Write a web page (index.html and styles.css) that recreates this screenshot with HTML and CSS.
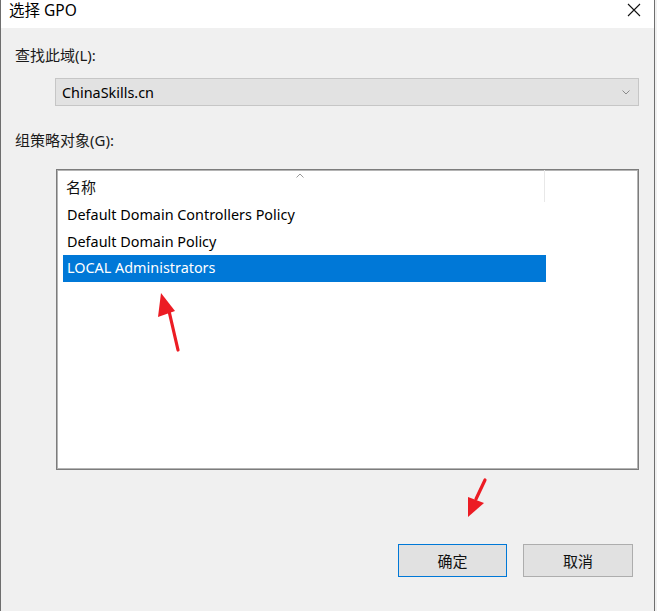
FILE: index.html
```html
<!DOCTYPE html>
<html lang="zh-CN">
<head>
<meta charset="utf-8">
<title>选择 GPO</title>
<link rel="stylesheet" href="styles.css">
</head>
<body>
<div class="dialog">
  <div class="titlebar">
    <span class="title">选择 GPO</span>
    <svg class="close" width="14" height="14" viewBox="0 0 14 14"><path d="M1 1 L13 13 M13 1 L1 13" stroke="#111" stroke-width="1.1" fill="none"/></svg>
  </div>
  <div class="content">
    <div class="label label-domain">查找此域(L):</div>
    <div class="combo">
      <span class="combo-text">ChinaSkills.cn</span>
      <svg class="chev" width="8" height="5" viewBox="0 0 8 5"><path d="M0.5 0.5 L4 4 L7.5 0.5" stroke="#8a8a8a" stroke-width="1" fill="none"/></svg>
    </div>
    <div class="label label-gpo">组策略对象(G):</div>
    <div class="listbox">
      <div class="header">
        <div class="header-cell">
          <span class="hdr-text">名称</span>
          <svg class="sort" width="8" height="5" viewBox="0 0 8 5"><path d="M0.5 4.5 L4 1 L7.5 4.5" stroke="#9a9a9a" stroke-width="1" fill="none"/></svg>
        </div>
        <div class="header-rest"></div>
      </div>
      <div class="row">Default Domain Controllers Policy</div>
      <div class="row">Default Domain Policy</div>
      <div class="row selected">LOCAL Administrators</div>
    </div>
    <div class="buttons">
      <div class="btn btn-default">确定</div>
      <div class="btn">取消</div>
    </div>
  </div>
  <svg class="arrows" width="657" height="611" viewBox="0 0 657 611">
    <path d="M178 350 L169 311" stroke="#ec1c24" stroke-width="3.2" stroke-linecap="round" fill="none"/>
    <polygon points="161,293 158,317 175,311" fill="#ec1c24"/>
    <path d="M485 480 L476 499" stroke="#ec1c24" stroke-width="3.2" stroke-linecap="round" fill="none"/>
    <polygon points="468,517 468,497 484,503" fill="#ec1c24"/>
  </svg>
</div>
</body>
</html>
```

FILE: styles.css
```css
html, body {
  margin: 0;
  padding: 0;
}
body {
  width: 657px;
  height: 611px;
  background: #f0f0f0;
  font-family: "Noto Sans", "Noto Sans CJK SC", sans-serif;
  color: #111;
  overflow: hidden;
}
.dialog {
  position: relative;
  width: 653px;
  height: 611px;
  border-left: 1px solid #6e6e6e;
  border-right: 1px solid #6e6e6e;
  background: #f0f0f0;
}
.titlebar {
  height: 28px;
  background: #fff;
  display: flex;
  align-items: center;
  justify-content: space-between;
  padding-left: 8px;
  padding-right: 13px;
}
.title {
  font-family: "Noto Sans", "Noto Sans CJK SC", sans-serif;
  font-size: 15.5px;
  line-height: 20px;
  margin-top: -8px;
  color: #000;
}
.close {
  margin-top: -9px;
}
.content {
  padding-left: 14px;
}
.label {
  font-family: "Noto Sans", "Noto Sans CJK SC", sans-serif;
  font-size: 15px;
  line-height: 20px;
  color: #1a1a1a;
}
.label-domain {
  margin-top: 17px;
}
.combo {
  margin-top: 13px;
  margin-left: 40px;
  width: 568px;
  height: 26px;
  border: 1px solid #c6c6c6;
  background: #e2e2e2;
  display: flex;
  align-items: center;
  justify-content: space-between;
  padding-left: 6px;
  padding-right: 8px;
  box-sizing: content-box;
}
.combo-text {
  font-size: 14.4px;
  color: #000;
  margin-top: 1px;
}
.label-gpo {
  margin-top: 24px;
}
.listbox {
  margin-top: 19px;
  margin-left: 41px;
  width: 581px;
  height: 299px;
  border: 1px solid #7c7c7c;
  box-shadow: inset 1px 1px 0 #b4b4b4, inset -1px -1px 0 #b4b4b4;
  background: #fff;
}
.header {
  height: 32px;
  display: flex;
}
.header-cell {
  position: relative;
  width: 488px;
  border-right: 1px solid #e8e8e8;
  display: flex;
  align-items: center;
  padding-left: 9px;
  box-sizing: border-box;
}
.hdr-text {
  font-family: "Noto Sans CJK SC", sans-serif;
  font-size: 15px;
  line-height: 20px;
  margin-top: 1px;
}
.sort {
  position: absolute;
  left: 239px;
  top: 3px;
}
.row {
  margin-left: 6px;
  width: 479px;
  height: 26.5px;
  line-height: 26px;
  padding-left: 4px;
  font-size: 14.4px;
  color: #000;
  white-space: nowrap;
}
.row.selected {
  background: #0078d7;
  color: #fff;
}
.buttons {
  margin-top: 74px;
  margin-left: 383px;
  display: flex;
  gap: 16px;
}
.btn {
  width: 107px;
  height: 31px;
  border: 1px solid #adadad;
  background: #e1e1e1;
  display: flex;
  align-items: center;
  justify-content: center;
  font-family: "Noto Sans CJK SC", sans-serif;
  font-size: 15px;
  color: #111;
}
.btn-default {
  border-color: #0078d7;
}
.btn + .btn {
  width: 108px;
}
.arrows {
  position: absolute;
  top: 0;
  left: -1px;
  pointer-events: none;
}
```
